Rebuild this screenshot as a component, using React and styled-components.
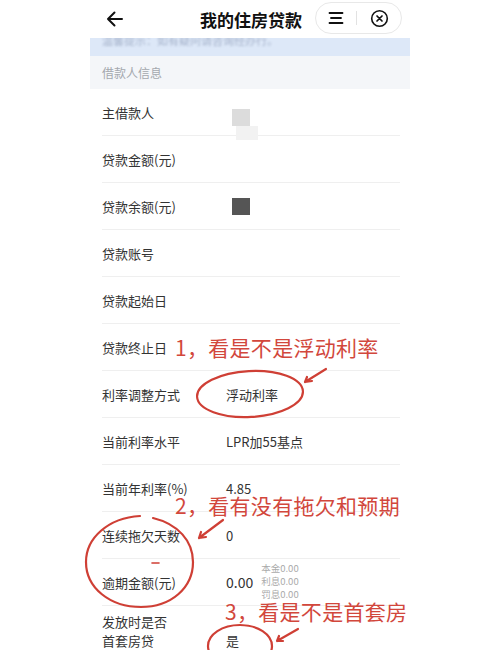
import React from "react";
import styled, { createGlobalStyle } from "styled-components";

const Global = createGlobalStyle`
  html, body { margin: 0; padding: 0; background: #fff; }
  body { font-family: "Noto Sans CJK SC", "Noto Sans", sans-serif; color: #333; }
`;

const Page = styled.div`
  position: relative;
  width: 500px;
  height: 650px;
  overflow: hidden;
  background: #fff;
`;

const Phone = styled.div`
  width: 320px;
  margin: 0 auto;
  display: flex;
  flex-direction: column;
`;

const Header = styled.div`
  height: 38px;
  display: grid;
  grid-template-columns: 60px 1fr 96px;
  align-items: center;
`;

const Back = styled.div`
  padding-left: 16px;
  display: flex;
  align-items: center;
`;

const Title = styled.div`
  text-align: center;
  font-size: 17px;
  font-weight: 700;
  color: #111;
  padding-left: 38px;
`;

const Capsule = styled.div`
  width: 87px;
  height: 32px;
  margin-top: -2px;
  margin-left: 1px;
  box-sizing: border-box;
  border: 1px solid #e8e8e8;
  border-radius: 16px;
  display: flex;
  align-items: center;
  justify-content: space-around;
  padding: 0 6px;
`;

const CapDivider = styled.div`
  width: 1px;
  height: 14px;
  background: #e2e2e2;
`;

const Notice = styled.div`
  height: 18px;
  background: #dde8f8;
  overflow: hidden;
  padding-left: 12px;
`;

const NoticeText = styled.div`
  font-size: 11px;
  color: #a6b3cb;
  margin-top: -6px;
  filter: blur(0.8px);
`;

const SectionHead = styled.div`
  height: 33px;
  background: #f4f6f9;
  padding-left: 12px;
  display: flex;
  align-items: center;
  font-size: 12px;
  color: #a4a8ae;
`;

const Row = styled.div`
  margin: 0 10px 0 12px;
  height: ${(p) => p.$h || 47}px;
  box-sizing: border-box;
  border-bottom: ${(p) => (p.$last ? "none" : "1px solid #efefef")};
  display: flex;
  align-items: ${(p) => (p.$top ? "flex-start" : "center")};
  padding-top: ${(p) => (p.$top ? "6px" : "0")};
`;

const Label = styled.div`
  width: 124px;
  flex: none;
  font-size: 13px;
  color: #333;
  line-height: 19px;
`;

const Value = styled.div`
  font-size: 13px;
  line-height: 19px;
  color: #333;
  display: flex;
  align-items: center;
  gap: 8px;
  margin-top: ${(p) => p.$drop || 0}px;
`;

const BigNum = styled.span`
  font-size: 14px;
`;

const MaskStack = styled.div`
  display: flex;
  flex-direction: column;
  margin-left: 6px;
  margin-top: ${(p) => (p.$pale ? "10px" : "0")};
  margin-bottom: ${(p) => (p.$pale ? "-14px" : "0")};
`;

const Mask = styled.div`
  width: ${(p) => p.$w || 18}px;
  height: ${(p) => p.$hh || 17}px;
  background: ${(p) => p.$c};
  margin-left: ${(p) => p.$ml || 0}px;
`;

const SubList = styled.div`
  display: flex;
  flex-direction: column;
  font-size: 9.5px;
  line-height: 13px;
  color: #aaa;
  margin-top: -2px;
`;

const Overlay = styled.div`
  position: absolute;
  inset: 0;
  pointer-events: none;
`;

const Note = styled.div`
  position: absolute;
  left: ${(p) => p.$x}px;
  top: ${(p) => p.$y}px;
  font-size: 21px;
  line-height: 1;
  color: #d2473c;
  white-space: nowrap;
  letter-spacing: 0.3px;
`;

const Svg = styled.svg`
  position: absolute;
  left: 0;
  top: 0;
`;

const rows = [
  { label: "主借款人", mask: "#dcdcdc", pale: true },
  { label: "贷款金额(元)" },
  { label: "贷款余额(元)", mask: "#555" },
  { label: "贷款账号" },
  { label: "贷款起始日" },
  { label: "贷款终止日" },
  { label: "利率调整方式", value: "浮动利率" },
  { label: "当前利率水平", value: "LPR加55基点" },
  { label: "当前年利率(%)", value: "4.85" },
  { label: "连续拖欠天数", value: "0" },
];

export default function App() {
  return (
    <Page>
      <Global />
      <Phone>
        <Header>
          <Back>
            <svg width="18" height="16" viewBox="0 0 18 16">
              <path d="M16 8H2M8.5 1.5L2 8l6.5 6.5" fill="none" stroke="#111" strokeWidth="2" strokeLinecap="round" strokeLinejoin="round" />
            </svg>
          </Back>
          <Title>我的住房贷款</Title>
          <Capsule>
            <svg width="16" height="14" viewBox="0 0 16 14">
              <path d="M1.5 2h13M3 7h10M1.5 12h13" stroke="#111" strokeWidth="1.8" strokeLinecap="round" />
            </svg>
            <CapDivider />
            <svg width="19" height="19" viewBox="0 0 19 19">
              <circle cx="9.5" cy="9.5" r="7.8" fill="none" stroke="#111" strokeWidth="1.6" />
              <path d="M7 7l5 5M12 7l-5 5" stroke="#111" strokeWidth="1.7" strokeLinecap="round" />
            </svg>
          </Capsule>
        </Header>
        <Notice>
          <NoticeText>温馨提示：如有疑问请咨询经办行。</NoticeText>
        </Notice>
        <SectionHead>借款人信息</SectionHead>
        {rows.map((r) => (
          <Row key={r.label}>
            <Label>{r.label}</Label>
            <Value>
              {r.mask && (
                <MaskStack $pale={r.pale}>
                  <Mask $c={r.mask} />
                  {r.pale && <Mask $c="#f2f2f2" $w={22} $hh={14} $ml={4} />}
                </MaskStack>
              )}
              {r.value}
            </Value>
          </Row>
        ))}
        <Row>
          <Label>逾期金额(元)</Label>
          <Value>
            <BigNum>0.00</BigNum>
            <SubList>
              <span>本金0.00</span>
              <span>利息0.00</span>
              <span>罚息0.00</span>
            </SubList>
          </Value>
        </Row>
        <Row $h={60} $top $last>
          <Label>
            发放时是否
            <br />
            首套房贷
          </Label>
          <Value $drop={19}>是</Value>
        </Row>
      </Phone>

      <Overlay>
        <Svg width="500" height="650" viewBox="0 0 500 650">
          <g fill="none" stroke="#cf3f35" strokeWidth="2.2" strokeLinecap="round">
            <ellipse cx="250" cy="394" rx="53" ry="23" transform="rotate(-3 250 394)" />
            <path d="M305 382L326 369M305 382l7-1M305 382l2-5" />
            <path d="M140 516c-32 2-54 22-54 46c0 26 24 45 55 45c30 0 52-19 52-45c0-21-15-38-40-44" />
            <path d="M199 538L223 520M199 538l7-1M199 538l2-6" />
            <path d="M152 563h7" strokeWidth="1.6" />
            <ellipse cx="240" cy="646" rx="32" ry="21" />
            <path d="M277 641L298 629M277 641l6 0M277 641l2-5" />
          </g>
        </Svg>
        <Note $x={175} $y={337}>1，看是不是浮动利率</Note>
        <Note $x={175} $y={495}>2，看有没有拖欠和预期</Note>
        <Note $x={225} $y={601}>3，看是不是首套房</Note>
      </Overlay>
    </Page>
  );
}
